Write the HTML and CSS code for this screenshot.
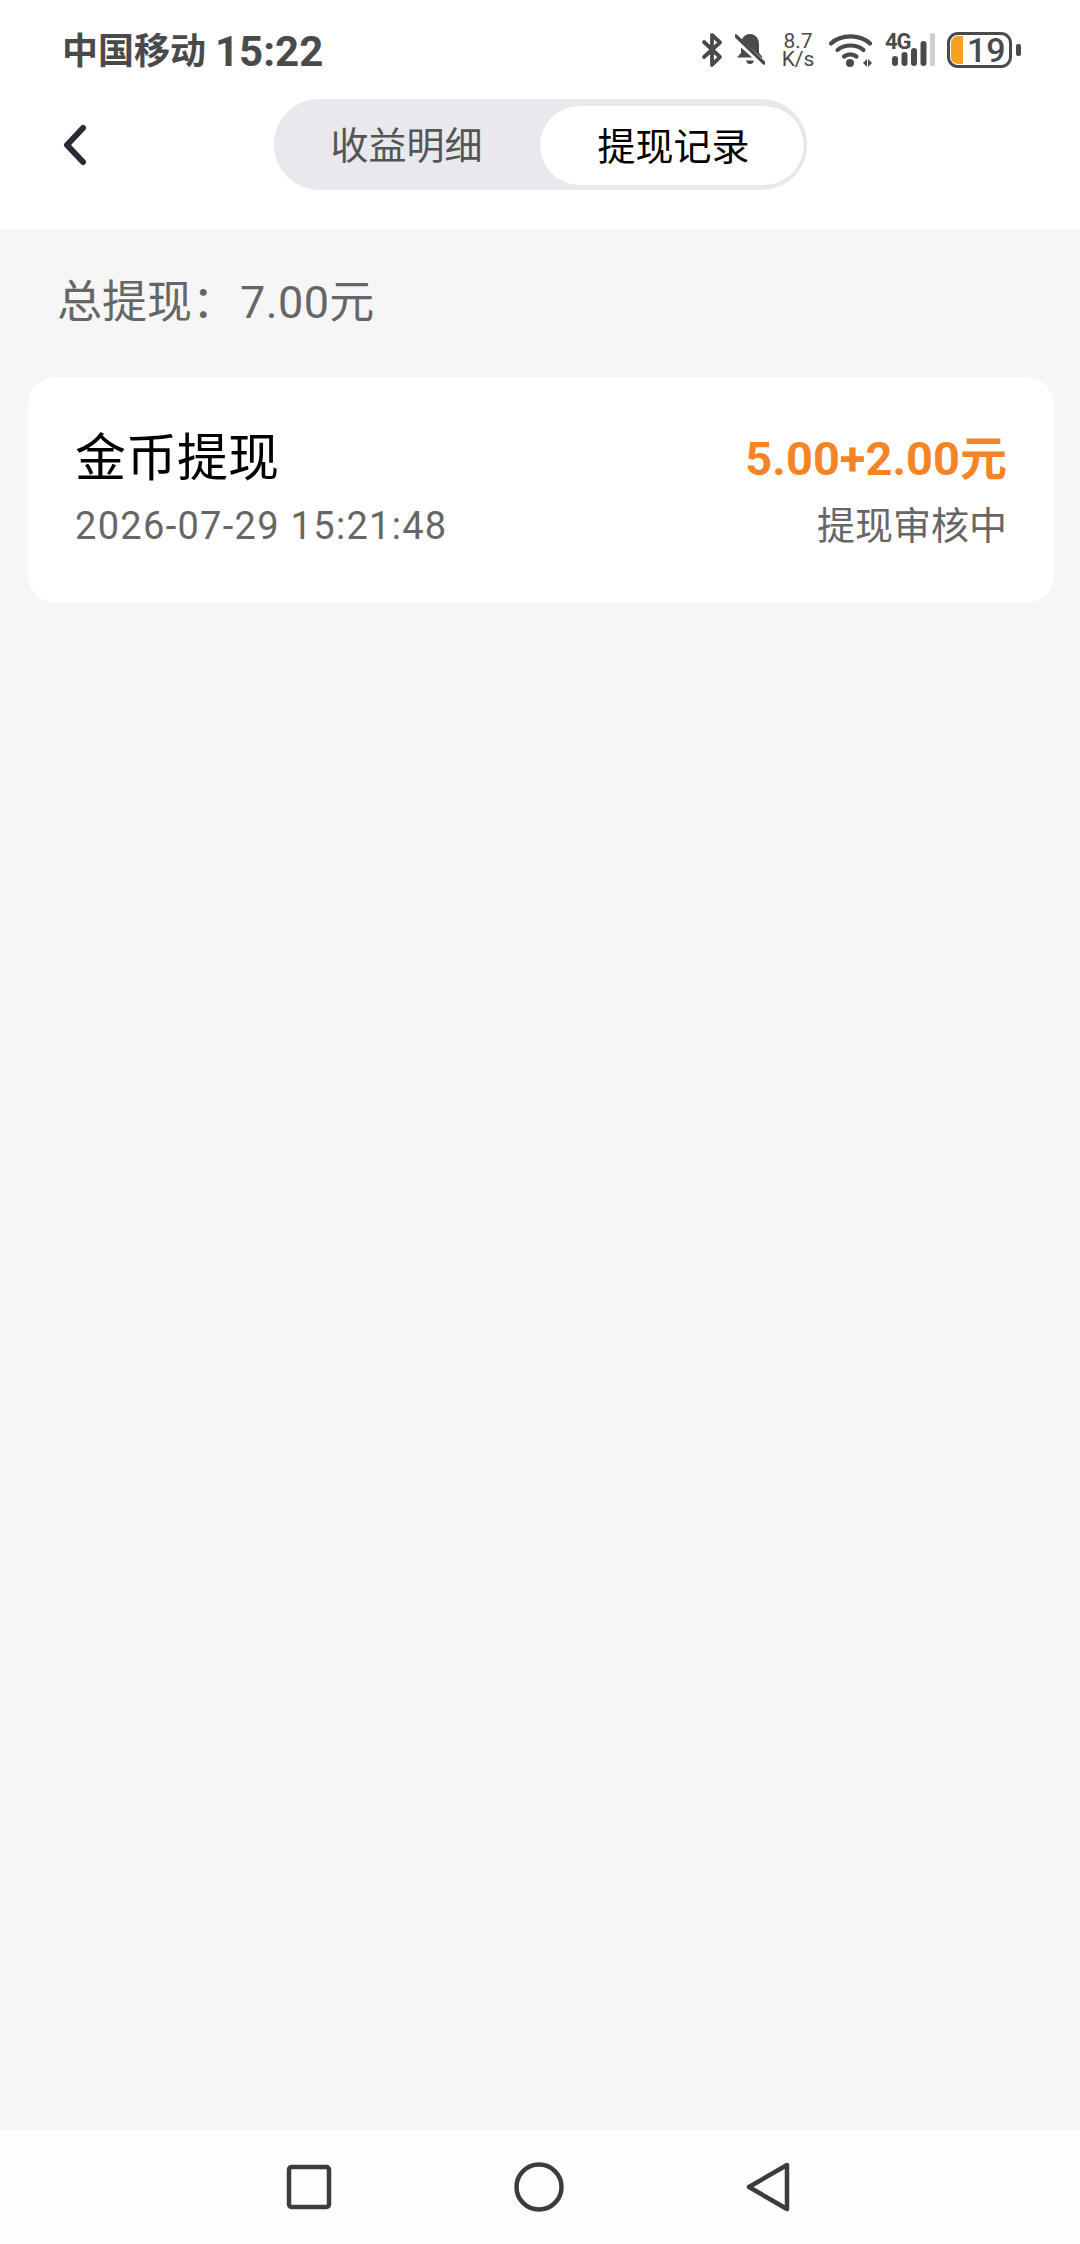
FILE: index.html
```html
<!DOCTYPE html>
<html lang="zh-CN">
<head>
<meta charset="utf-8">
<title>提现记录</title>
<link rel="stylesheet" href="styles.css">
</head>
<body>
<div class="page">
  <header class="header">
    <div class="status">
      <div class="status-left"><span class="carrier">中国移动</span><span class="clock">15:22</span></div>
      <div class="status-right">
        <svg class="ic-bt" viewBox="0 0 22 36" width="22" height="36"><path d="M3 10l16 15-8 8V3l8 7.500L3 25" fill="none" stroke="#4a4a4a" stroke-width="3.800" stroke-linecap="round" stroke-linejoin="round"/></svg>
        <svg class="ic-bell" viewBox="0 0 30 36" width="30" height="36"><path d="M15 2c-5.500 0-9 4.500-9 10v9l-4 4.500h26L24 21v-9c0-5.500-3.500-10-9-10z" fill="#4a4a4a"/><path d="M11 28.500h8c-.5 2.500-2 3.500-4 3.500s-3.500-1-4-3.500z" fill="#4a4a4a"/><path d="M0 6l30 27" stroke="#fff" stroke-width="6"/><path d="M1 4l28 27" stroke="#4a4a4a" stroke-width="3.400" stroke-linecap="round"/></svg>
        <div class="speed"><span>8.7</span><span>K/s</span></div>
        <svg class="ic-wifi" viewBox="0 0 44 36" width="44" height="36"><g fill="none" stroke="#4a4a4a" stroke-width="4.200" stroke-linecap="round"><path d="M2 11.500C12 2 31 2 41 11.500"/><path d="M8.500 18c7-6 19-6 26 0"/><path d="M15 24.500c3.500-2.800 9-2.800 12.500 0"/></g><circle cx="21" cy="31" r="4" fill="#4a4a4a"/><path d="M34 31l4-4v8zM39 27l4 4-4 4z" fill="#4a4a4a"/></svg>
        <div class="signal">
          <span class="net">4G</span>
          <svg viewBox="0 0 44 36" width="44" height="36"><g fill="#4a4a4a"><rect x="0" y="24" width="6" height="10" rx="3"/><rect x="9.500" y="20" width="6" height="14" rx="3"/><rect x="19" y="16" width="6" height="18" rx="3"/><rect x="28.500" y="9" width="6" height="25" rx="3"/></g><rect x="38" y="1" width="5" height="33" rx="1.500" fill="#cfcfcf"/></svg>
        </div>
        <div class="battery"><span class="battery-fill"></span><span class="battery-num">19</span></div>
        <span class="battery-nub"></span>
      </div>
    </div>
    <div class="navbar">
      <svg class="back" viewBox="0 0 24 42" width="24" height="42"><path d="M20 4L4 21l16 17" fill="none" stroke="#2a2a3a" stroke-width="6" stroke-linecap="round" stroke-linejoin="round"/></svg>
      <div class="segment">
        <div class="tab">收益明细</div>
        <div class="tab tab-active">提现记录</div>
      </div>
    </div>
  </header>
  <main class="main">
    <div class="summary">总提现&#xFF1A;<span class="total">7.00元</span></div>
    <section class="card">
      <div class="col">
        <div class="title">金币提现</div>
        <div class="meta meta-date">2026-07-29 15:21:48</div>
      </div>
      <div class="col col-right">
        <div class="amount">5.00+2.00元</div>
        <div class="meta">提现审核中</div>
      </div>
    </section>
  </main>
  <nav class="sysnav">
    <svg viewBox="0 0 46 46" width="46" height="46"><rect x="3" y="3" width="40" height="40" rx="2.500" fill="none" stroke="#3c3c3c" stroke-width="4.500"/></svg>
    <svg viewBox="0 0 50 50" width="50" height="50"><circle cx="25" cy="25" r="22.500" fill="none" stroke="#3c3c3c" stroke-width="4.500"/></svg>
    <svg viewBox="0 0 44 50" width="44" height="50"><path d="M41 3L3 25l38 22z" fill="none" stroke="#3c3c3c" stroke-width="4.500" stroke-linejoin="round"/></svg>
  </nav>
</div>
</body>
</html>
```
FILE: styles.css
```css
* { box-sizing: border-box; }
html, body { margin: 0; padding: 0; }
body { font-family: Roboto, "Noto Sans CJK SC", sans-serif; background: #f6f6f6; }
.page { width: 1080px; height: 2244px; display: flex; flex-direction: column; overflow: hidden; }

.header { height: 229px; background: #fff; display: flex; flex-direction: column; flex: none; }
.status { height: 99px; padding: 4px 59px 0 62px; display: flex; align-items: center; justify-content: space-between; }
.status-left { display: flex; align-items: center; gap: 9px; color: #4a4a4a; font-weight: 700; line-height: 1; }
.carrier { font-size: 36px; }
.clock { font-size: 42px; }
.status-right { display: flex; align-items: center; margin-top: -4px; }
.status-right svg { display: block; flex: none; }
.ic-bell { margin-left: 12px; }
.speed { margin-left: 16px; width: 34px; display: flex; flex-direction: column; font-size: 21px; line-height: 18px; color: #4a4a4a; align-items: center; }
.ic-wifi { margin-left: 14px; }
.signal { position: relative; margin-left: 12px; padding-left: 7px; }
.net { position: absolute; left: 0; top: 0; font-size: 22px; line-height: 20px; font-weight: 700; color: #4a4a4a; letter-spacing: -1px; }
.battery { margin-left: 11px; width: 65px; height: 36px; border: 3px solid #4a4a4a; border-radius: 11px; display: flex; align-items: center; }
.battery-fill { width: 12px; align-self: stretch; background: #f5a01e; margin: 1px; border-radius: 7px 0 0 7px; flex: none; }
.battery-num { margin-left: 3px; font-size: 34px; line-height: 1; font-weight: 500; color: #4a4a4a; }
.battery-nub { margin-left: 4px; width: 5px; height: 12px; border-radius: 2px; background: #4a4a4a; }

.navbar { display: grid; grid-template-columns: 1fr 533px 1fr; align-items: center; height: 91px; }
.back { margin-left: 63px; display: block; }
.segment { height: 91px; border-radius: 46px; background: #e8e8ed; display: flex; align-items: center; padding-right: 3px; }
.tab { flex: 1; height: 79px; display: flex; align-items: center; justify-content: center; font-size: 38px; color: #555; padding-bottom: 4px; }
.tab-active { flex: none; width: 264px; margin-top: 1px; padding-left: 4px; background: #fff; color: #000; border-radius: 40px; box-shadow: 1px 0 2px rgba(0,0,0,.04); }

.main { flex: 1; }
.summary { height: 148px; padding: 0 0 9px 57px; display: flex; align-items: center; font-size: 45px; color: #666; white-space: pre; }
.total { margin-left: 3px; letter-spacing: .4px; }
.card { margin: 0 26px 0 28px; height: 226px; background: #fff; border-radius: 28px; padding: 0 47px; display: flex; justify-content: space-between; align-items: center; }
.col { display: flex; flex-direction: column; gap: 13px; padding: 7px 0 2px; }
.col-right { align-items: flex-end; }
.title { font-size: 51px; line-height: 60px; color: #000; margin-top: -6px; }
.amount { font-size: 47px; line-height: 60px; font-weight: 700; color: #f58426; margin-top: -6px; }
.meta { font-size: 38px; line-height: 48px; color: #666; }
.meta-date { letter-spacing: 1.3px; }

.sysnav { flex: none; height: 114px; background: #fdfdfd; display: flex; align-items: center; padding-left: 286px; gap: 182px; }
.sysnav svg { display: block; }
```
